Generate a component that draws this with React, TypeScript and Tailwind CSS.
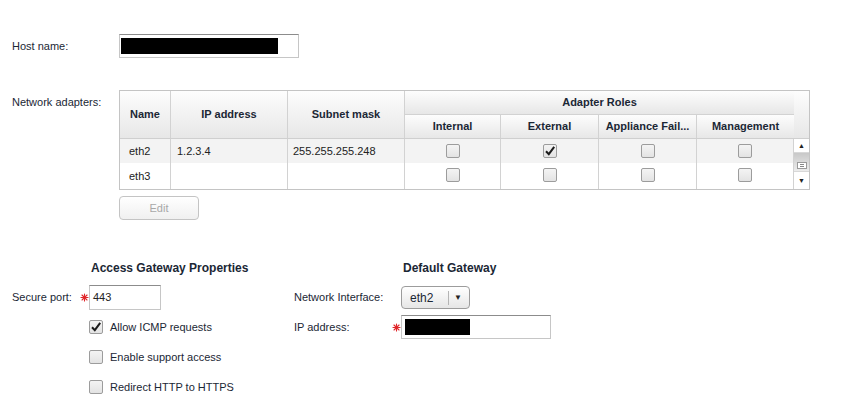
import React from "react";

const cols = "grid-cols-[51px_117px_117px_96px_98px_98px_97px_15px]";

function Asterisk() {
  return (
    <svg width="9" height="9" viewBox="0 0 9 9" className="block">
      <g stroke="#e0262a" strokeWidth="1.1" strokeLinecap="round">
        <line x1="4.5" y1="1" x2="4.5" y2="8" />
        <line x1="1" y1="4.5" x2="8" y2="4.5" />
        <line x1="2" y1="2" x2="7" y2="7" />
        <line x1="7" y1="2" x2="2" y2="7" />
      </g>
    </svg>
  );
}

function Checkbox({ checked = false }: { checked?: boolean }) {
  return (
    <div className="w-[14px] h-[14px] border border-[#9c9c9c] rounded-[2px] bg-linear-to-b from-[#f4f4f4] to-[#e3e3e3] flex items-center justify-center">
      {checked && (
        <svg width="12" height="12" viewBox="0 0 12 12">
          <path d="M2 6.2 L4.8 9.2 L10.2 1.8" fill="none" stroke="#1c1c1c" strokeWidth="2" />
        </svg>
      )}
    </div>
  );
}

function Scrollbar() {
  return (
    <div className="w-[15px] flex flex-col bg-[#f0f0f0]">
      <div className="h-[14px] flex items-center justify-center bg-white border-b border-[#d8d8d8]">
        <span className="text-[7px] leading-none text-[#222]">▲</span>
      </div>
      <div className="h-[18px] bg-linear-to-b from-[#c8c8c8] to-[#ececec] flex items-end justify-center pb-[2px]">
        <div className="w-[10px] h-[7px] border border-[#9a9a9a] bg-white flex flex-col justify-center gap-[1px] px-[2px]">
          <div className="h-px bg-[#888]" />
          <div className="h-px bg-[#888]" />
        </div>
      </div>
      <div className="flex-1 flex items-center justify-center bg-white border-t border-[#d8d8d8]">
        <span className="text-[7px] leading-none text-[#222]">▼</span>
      </div>
    </div>
  );
}

const rows = [
  { name: "eth2", ip: "1.2.3.4", mask: "255.255.255.248", roles: [false, true, false, false] },
  { name: "eth3", ip: "", mask: "", roles: [false, false, false, false] },
];

function AdapterTable() {
  const head = "bg-linear-to-b from-[#fdfdfd] to-[#e7e7e7] flex items-center justify-center font-bold text-[11px] text-[#1b2735]";
  return (
    <div className="w-[691px] border border-[#c4c4c4]">
      <div className={`grid ${cols} grid-rows-[24px_23px] border-b border-[#cfcfcf]`}>
        <div className={`${head} row-span-2 border-r border-[#d2d2d2]`}>Name</div>
        <div className={`${head} row-span-2 border-r border-[#d2d2d2]`}>IP address</div>
        <div className={`${head} row-span-2 border-r border-[#d2d2d2]`}>Subnet mask</div>
        <div className={`${head} col-span-4 border-b border-[#d2d2d2]`}>Adapter Roles</div>
        <div className={`${head} row-span-2`} />
        <div className={`${head} border-r border-[#d2d2d2]`}>Internal</div>
        <div className={`${head} border-r border-[#d2d2d2]`}>External</div>
        <div className={`${head} border-r border-[#d2d2d2]`}>Appliance Fail...</div>
        <div className={head}>Management</div>
      </div>
      <div className="flex h-[50px]">
        <div className="w-[674px] flex flex-col">
          {rows.map((r, i) => (
            <div
              key={r.name}
              className={`grid grid-cols-[51px_117px_117px_96px_98px_98px_97px] ${i === 0 ? "h-[24px] bg-[#f3f3f3]" : "flex-1 bg-white"} text-[11px] text-[#222]`}
            >
              <div className="border-r border-[#d2d2d2] pl-[9px] flex items-center">{r.name}</div>
              <div className="border-r border-[#d2d2d2] pl-[6px] flex items-center">{r.ip}</div>
              <div className="border-r border-[#d2d2d2] pl-[5px] flex items-center">{r.mask}</div>
              {r.roles.map((c, j) => (
                <div key={j} className="border-r border-[#d2d2d2] flex items-start pt-[5px] justify-center">
                  <Checkbox checked={c} />
                </div>
              ))}
            </div>
          ))}
        </div>
        <Scrollbar />
      </div>
    </div>
  );
}

export default function App() {
  return (
    <div className="w-[849px] h-[408px] bg-white overflow-hidden font-['Liberation_Sans',Arial,sans-serif] text-[11px] text-[#1b2735] pl-3 pt-[34px]">
      {/* Host name */}
      <div className="flex items-center">
        <div className="w-[107px]">Host name:</div>
        <div className="w-[180px] h-[24px] border border-[#c6c6c6] border-t-[#8c8c8c] flex items-center pl-px">
          <div className="w-[157px] h-[16px] bg-black" />
        </div>
      </div>

      {/* Network adapters */}
      <div className="mt-[32px] flex items-start">
        <div className="w-[107px] pt-[4px]">Network adapters:</div>
        <div className="flex flex-col">
          <AdapterTable />
          <button className="mt-[6px] w-[80px] h-[24px] rounded-[4px] border border-[#c4c4c4] bg-linear-to-b from-white to-[#f0f0f0] text-[#a8a8a8] text-[11px]">
            Edit
          </button>
        </div>
      </div>

      {/* Properties */}
      <div className="mt-[41px] flex">
        <div className="w-[282px]">
          <div className="pl-[79px] font-bold text-[12px] leading-[14px]">Access Gateway Properties</div>
          <div className="mt-[10px] flex items-center h-[25px]">
            <div className="w-[68px]">Secure port:</div>
            <div className="w-[9px]"><Asterisk /></div>
            <div className="w-[72px] h-[25px] border border-[#c6c6c6] border-t-[#8c8c8c] flex items-center pl-[3px] text-[#222]">443</div>
          </div>
          <div className="mt-[2px] flex flex-col">
            {[
              ["Allow ICMP requests", true],
              ["Enable support access", false],
              ["Redirect HTTP to HTTPS", false],
            ].map(([label, c]) => (
              <div key={label as string} className="h-[30px] flex items-center pl-[77px] gap-[7px]">
                <Checkbox checked={c as boolean} />
                <span>{label as string}</span>
              </div>
            ))}
          </div>
        </div>

        <div className="flex-1">
          <div className="pl-[109px] font-bold text-[12px] leading-[14px]">Default Gateway</div>
          <div className="mt-[10px] flex items-center h-[25px]">
            <div className="w-[107px]">Network Interface:</div>
            <div className="w-[69px] h-[23px] rounded-[4px] border border-[#9c9c9c] bg-linear-to-b from-white to-[#e6e6e6] flex items-center">
              <span className="pl-[8px] w-[46px] text-[12px] text-[#1b2735]">eth2</span>
              <div className="w-px h-[14px] bg-[#b4b4b4]" />
              <span className="pl-[5px] text-[8px] leading-none text-[#222]">▼</span>
            </div>
          </div>
          <div className="mt-[5px] flex items-center h-[24px]">
            <div className="w-[98px]">IP address:</div>
            <div className="w-[9px]"><Asterisk /></div>
            <div className="w-[150px] h-[24px] border border-[#c6c6c6] border-t-[#8c8c8c] flex items-center pl-[3px]">
              <div className="w-[65px] h-[16px] bg-black" />
            </div>
          </div>
        </div>
      </div>
    </div>
  );
}
